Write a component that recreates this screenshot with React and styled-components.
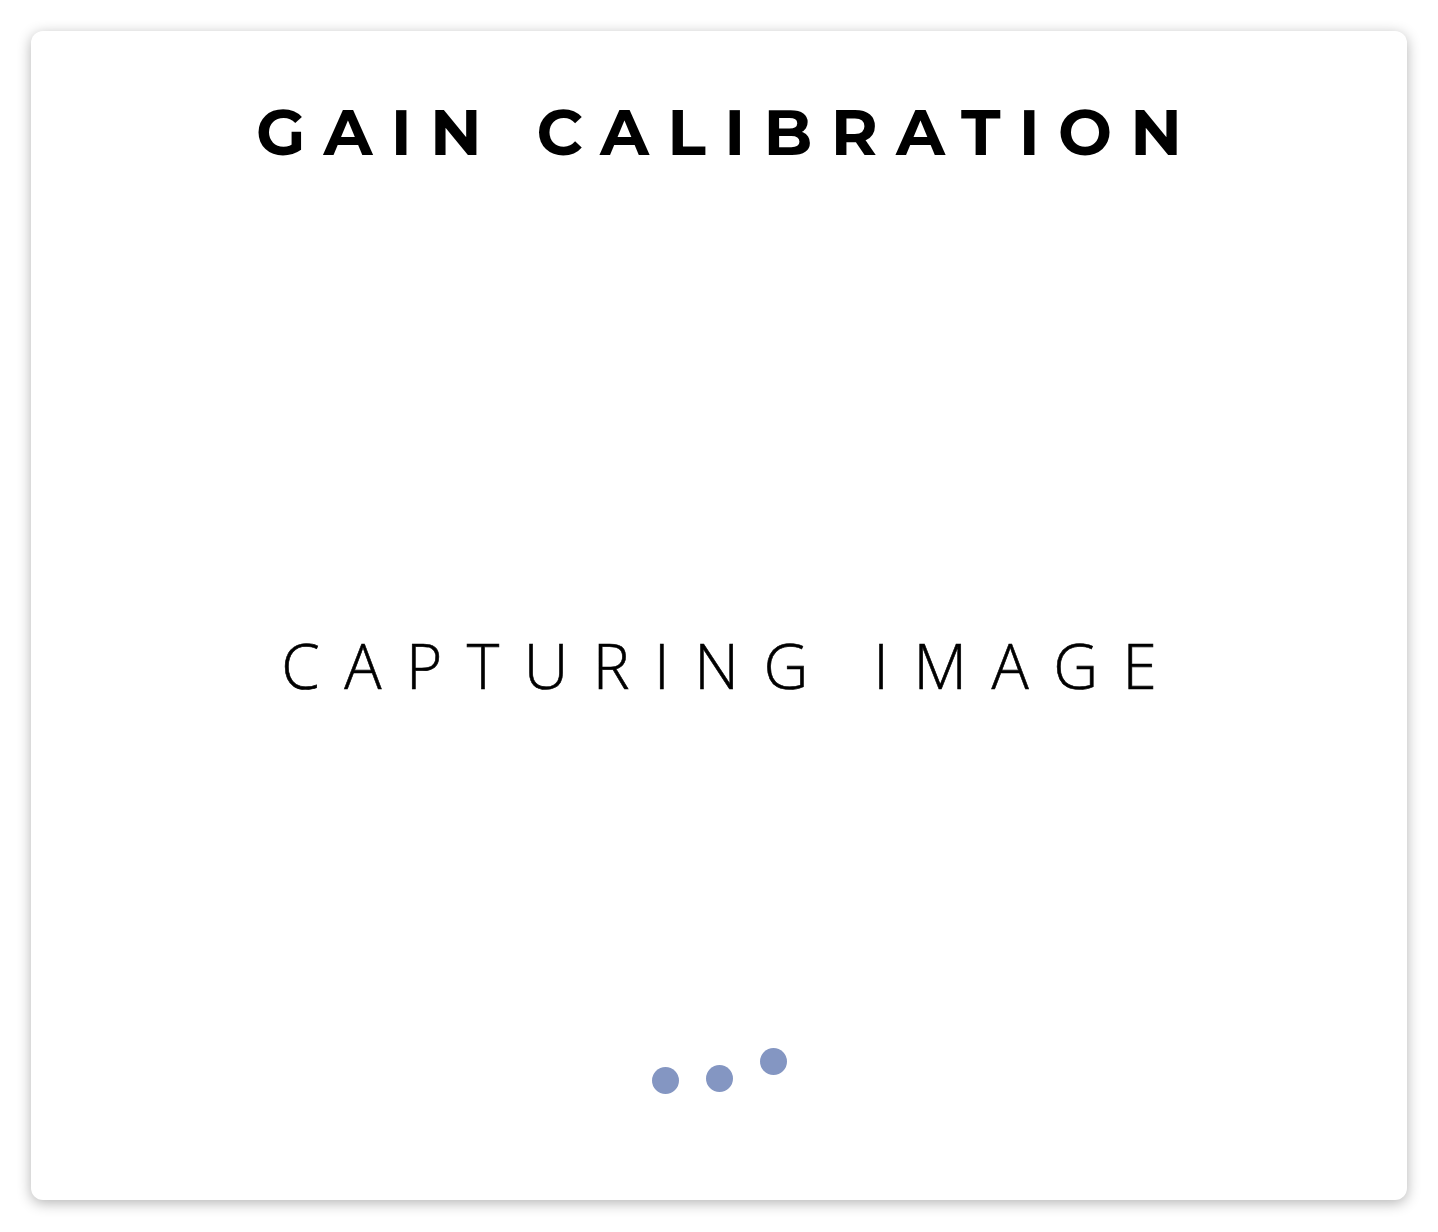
import React from "react";
import styled, { createGlobalStyle } from "styled-components";

const Global = createGlobalStyle`
  html, body { margin: 0; padding: 0; background: #ffffff; }
  body { font-family: "Open Sans", "Liberation Sans", sans-serif; }
`;

const Page = styled.div`
  padding: 31px 31px 32px 31px;
`;

const Card = styled.section`
  height: 1169px;
  background: #ffffff;
  border-radius: 12px;
  box-shadow: 0 3px 14px rgba(0, 0, 0, 0.3);
  display: flex;
  flex-direction: column;
  align-items: center;
  box-sizing: border-box;
  padding: 69px 0 106px;
`;

const Title = styled.h1`
  margin: 0;
  font-family: "Montserrat", "Open Sans", "Liberation Sans", sans-serif;
  font-weight: 700;
  font-size: 64px;
  line-height: 1;
  letter-spacing: 0.285em;
  margin-right: -0.285em;
  color: #000;
`;

const Body = styled.div`
  flex: 1;
  display: flex;
  align-items: center;
  justify-content: center;
  padding-top: 118px;
`;

const Status = styled.p`
  margin: 0;
  font-family: "Open Sans", "Liberation Sans", sans-serif;
  font-weight: 300;
  font-size: 62px;
  line-height: 1;
  letter-spacing: 0.395em;
  margin-right: -0.395em;
  color: #000;
  -webkit-text-stroke: 0.6px #000;
`;

const Dots = styled.div`
  display: flex;
  gap: 27px;
  align-items: flex-end;
  height: 46px;
`;

const Dot = styled.span`
  width: 27px;
  height: 27px;
  border-radius: 50%;
  background: #8496c2;
  transform: translateY(${(p) => p.$lift}px);
`;

export default function App() {
  const lifts = [0, -2, -19];
  return (
    <>
      <Global />
      <Page>
        <Card>
          <Title>GAIN CALIBRATION</Title>
          <Body>
            <Status>CAPTURING IMAGE</Status>
          </Body>
          <Dots>
            {lifts.map((l, i) => (
              <Dot key={i} $lift={l} />
            ))}
          </Dots>
        </Card>
      </Page>
    </>
  );
}
